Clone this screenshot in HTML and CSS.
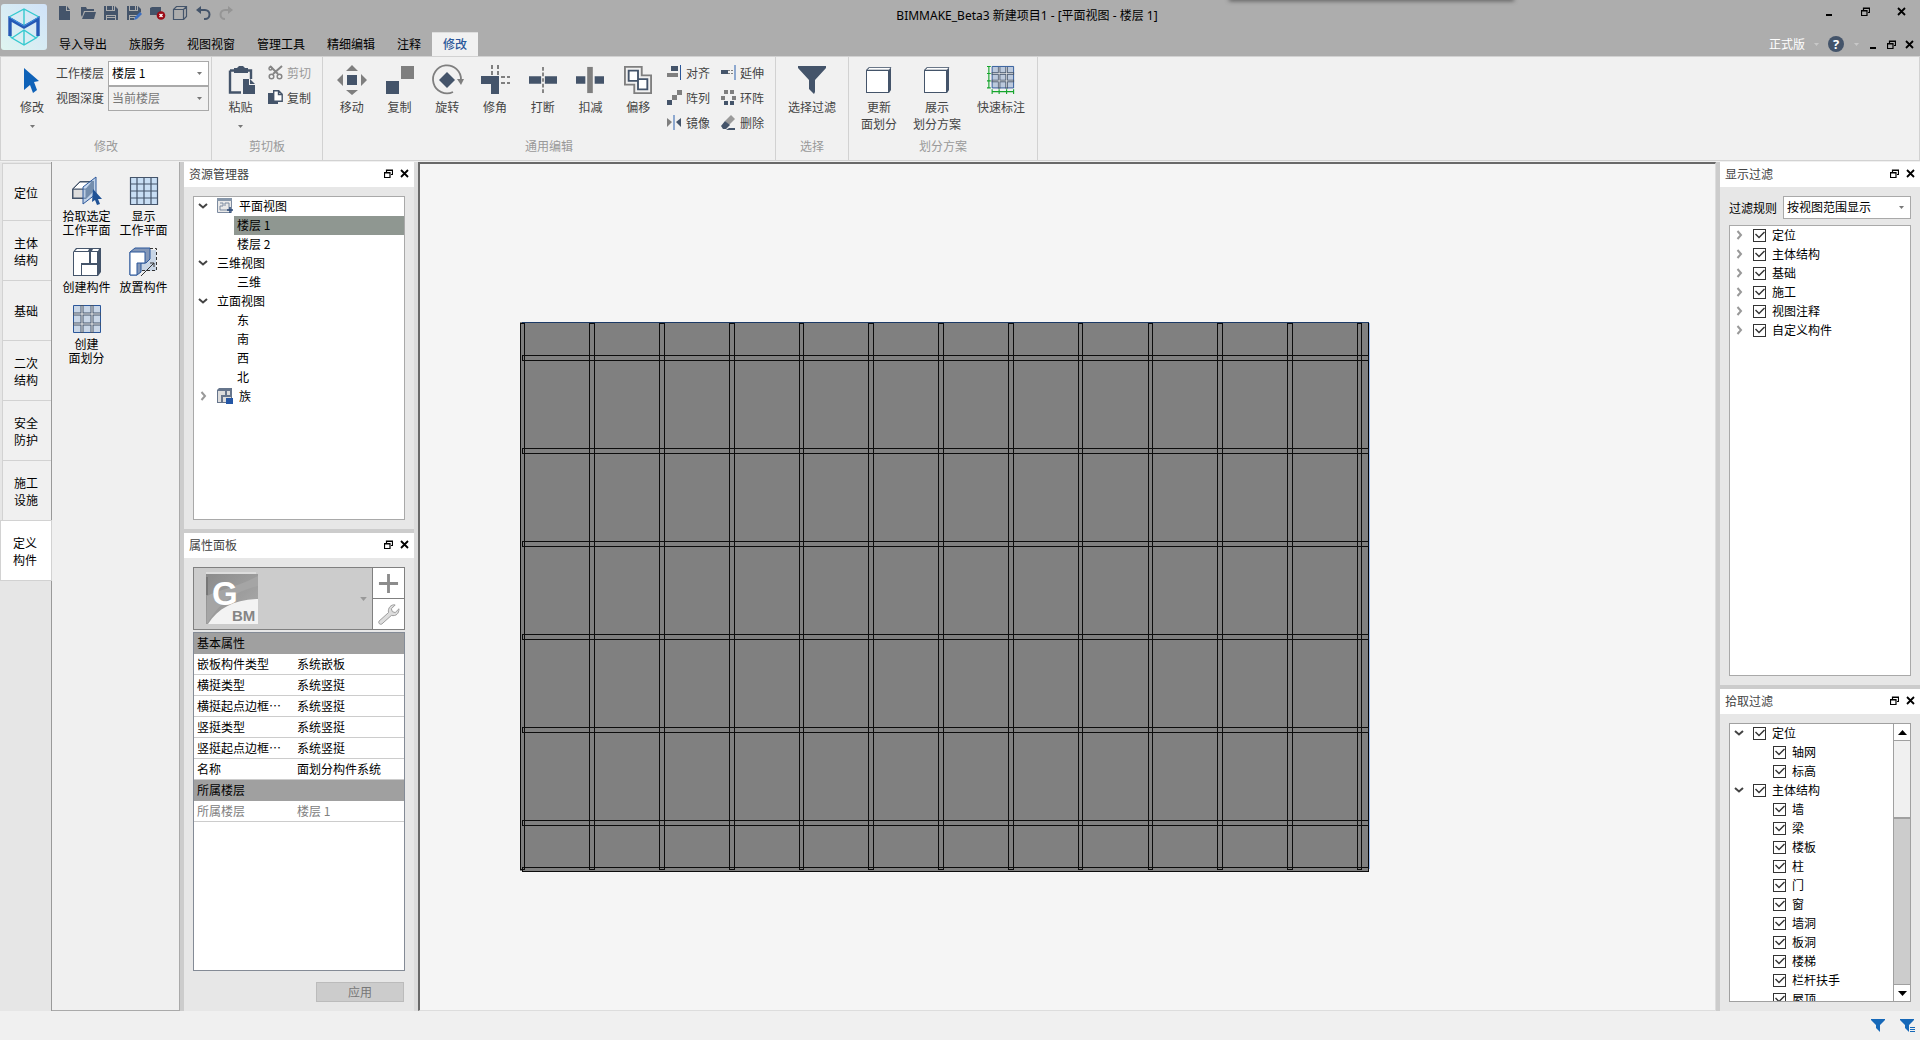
FILE: index.html
```html
<!DOCTYPE html>
<html lang="zh-CN">
<head>
<meta charset="utf-8">
<title>BIMMAKE_Beta3 新建项目1</title>
<link rel="stylesheet" href="styles.css">
</head>
<body>
<svg class="defs" aria-hidden="true">
  <symbol id="restore" viewBox="0 0 9 9"><path d="M2.5 3V1h6v4.500H7M.5 3.500h5.500v5H.5zM.5 4h5.500M2.500 1.500h6" fill="none" stroke="#000" stroke-width="1.200"/></symbol>
  <symbol id="close" viewBox="0 0 9 9"><path d="M1 1l7 7M8 1L1 8" stroke="#000" stroke-width="1.800"/></symbol>
  <symbol id="min" viewBox="0 0 9 9"><path d="M1 7h6v2H1z"/></symbol>
  <symbol id="caret" viewBox="0 0 5 3"><path d="M0 0h5L2.500 3z"/></symbol>
  <symbol id="down" viewBox="0 0 10 10"><path d="M1 3l4 3.500L9 3" fill="none" stroke="#444" stroke-width="2"/></symbol>
  <symbol id="right" viewBox="0 0 10 10"><path d="M3.500 1L7 5 3.500 9" fill="none" stroke="#999" stroke-width="2"/></symbol>
  <symbol id="box3d" viewBox="0 0 28 28"><path d="M1 4l3-3h22v23l-2 3H1z" fill="#44546a"/><path d="M1.500 4.500h22v22h-22z" fill="#fff" stroke="#44546a"/><path d="M2 4l2.500-2.500H26L24 4z" fill="#fff" stroke="#44546a" stroke-width=".6"/></symbol>
  <symbol id="grid9" viewBox="0 0 28 28"><path d="M.5.5h27v27H.5z" fill="#c9d6e6" stroke="#2b579a"/><path d="M9 0v28M19 0v28M0 9h28M0 19h28" stroke="#44546a" stroke-width="3"/><path d="M9 1v26M19 1v26M1 9h26M1 19h26" stroke="#eee"/></symbol>
</svg>
<div class="app">
  <header class="titlebar">
    <svg class="logo" viewBox="0 0 46 46"><defs><linearGradient id="lg" x1="0" y1="1" x2="1" y2="0"><stop offset="0" stop-color="#dff5f0"/><stop offset="1" stop-color="#d0e2f8"/></linearGradient></defs><rect width="46" height="46" rx="3" fill="url(#lg)"/><g fill="none" stroke="#35c9cf" stroke-width="1.400"><path d="M8 13L23 5l15 8M23 5v18M11 34l12-8 12 8-12 7zM23 26v15M8 31l3 3M38 31l-3 3"/></g><path d="M9 32V15l14 8 14-8v17" fill="none" stroke="#2559b5" stroke-width="3.400"/><path d="M8 13l15 9 15-9" fill="none" stroke="#3f92df"/></svg>
    <div class="titlemain">
      <div class="toprow">
        <div class="quick">
          <button aria-label="新建"><svg viewBox="0 0 16 16"><path d="M2 1h7v5h4v9H2zM10 1l3 4h-3z"/></svg></button>
          <button aria-label="打开"><svg viewBox="0 0 16 16"><path d="M1 2h5l1 2h7v2H4L2 12 1 10zM5 7h11l-2 7H2z"/></svg></button>
          <button aria-label="保存"><svg viewBox="0 0 16 16"><path d="M1 1h2v5h9V1l3 3v11h-2v-5H3v5H1zM4 1h5v4H4zM10 1h1v4h-1zM4 11h8v1H4zM4 13h8v2H4z"/></svg></button>
          <button aria-label="另存为"><svg viewBox="0 0 16 16"><path d="M1 1h2v5h9V1l3 3v3l-3 3H3v5H1zM4 1h5v4H4zM10 1h1v4h-1zM4 11h6v1H4zM4 13h4v2H4z"/><path d="M8 15l1-3 5-5 2 2-5 5z" fill="#3d6fc0"/></svg></button>
          <button aria-label="关闭项目"><svg viewBox="0 0 16 16"><path d="M1 3l2-1h9v8H1z"/><circle cx="12" cy="10.500" r="4.300" fill="#9b0b16"/><path d="M10.500 9l3 3M13.500 9l-3 3" stroke="#fff" stroke-width="1.300"/></svg></button>
          <button aria-label="三维视图"><svg viewBox="0 0 16 16"><path d="M1.500 4.500h10v10h-10zM1.500 4.500l3-3h10v10l-3 3M11.500 4.500l3-3" fill="none" stroke="#44546a" stroke-width="1.200"/></svg></button>
          <button aria-label="撤销"><svg viewBox="0 0 16 16"><path d="M1 5l5-4v8z"/><path d="M5 5h5a4.500 4.500 0 010 9H9" fill="none" stroke="#44546a" stroke-width="2"/></svg></button>
          <button aria-label="重做"><svg viewBox="0 0 16 16"><path d="M15 5l-5-4v8z" fill="#959595"/><path d="M11 5H7a4.500 4.500 0 000 9" fill="none" stroke="#959595" stroke-width="2"/></svg></button>
        </div>
        <h1>BIMMAKE_Beta3 新建项目1 - [平面视图 - 楼层 1]</h1>
        <div class="winbtns">
          <button aria-label="最小化"><svg><use href="#min"/></svg></button><button aria-label="还原"><svg><use href="#restore"/></svg></button><button aria-label="关闭"><svg><use href="#close"/></svg></button>
        </div>
      </div>
      <div class="tabrow">
        <nav class="tabs"><button>导入导出</button><button>族服务</button><button>视图视窗</button><button>管理工具</button><button>精细编辑</button><button>注释</button><button class="on">修改</button></nav>
        <div class="tools-right">
          <button class="edition">正式版<svg class="caret"><use href="#caret"/></svg></button>
          <button aria-label="帮助" class="help">?</button>
          <svg class="caret"><use href="#caret"/></svg>
          <div class="docbtns"><button aria-label="最小化文档"><svg><use href="#min"/></svg></button><button aria-label="还原文档"><svg><use href="#restore"/></svg></button><button aria-label="关闭文档"><svg><use href="#close"/></svg></button></div>
        </div>
      </div>
    </div>
    <div class="topshadow"></div>
  </header>

  <section class="ribbon">
    <div class="group g-modify">
      <div class="gbody">
        <button class="big"><svg viewBox="0 0 28 28"><path d="M6 2l15 13-5 1 3 8-4 3-3-8-6 5z" fill="#0f62b8"/></svg>修改<svg class="caret"><use href="#caret"/></svg></button>
        <div class="fields">
          <label for="floor">工作楼层</label><select id="floor"><option>楼层 1</option></select>
          <label for="depth">视图深度</label><select id="depth" class="dim"><option>当前楼层</option></select>
        </div>
      </div>
      <div class="glabel">修改</div>
    </div>
    <div class="group g-clip">
      <div class="gbody">
        <button class="big"><svg viewBox="0 0 28 28"><path d="M3 4.500h21V13M14 26.500H3v-22" fill="none" stroke="#44546a" stroke-width="2.400"/><path d="M7 2h3l2-2h4l2 2h3v5H7zM16 13h6v6h6v9H16zM23 13l5 5h-5z" fill="#44546a"/></svg>粘贴<svg class="caret"><use href="#caret"/></svg></button>
        <div class="smalls">
          <button class="small off"><svg viewBox="0 0 15 15"><path d="M2 1l8 8M14 1L5 9" stroke="#858585" stroke-width="2"/><g fill="none" stroke="#858585" stroke-width="1.500"><circle cx="3.500" cy="11.500" r="2.300"/><circle cx="11.500" cy="11.500" r="2.300"/><circle cx="2.500" cy="3.500" r="1.500"/></g></svg>剪切</button>
          <button class="small"><svg viewBox="0 0 15 15"><path d="M0 3h5v9h5v2H0z" fill="#44546a"/><path d="M5.700.7h5l3.500 3.500v7.100H5.700zM10.500 1v3.500H14" fill="#fff" stroke="#44546a" stroke-width="1.400"/></svg>复制</button>
        </div>
      </div>
      <div class="glabel">剪切板</div>
    </div>
    <div class="group g-edit">
      <div class="gbody">
        <button class="big"><svg viewBox="0 0 28 28"><path d="M9 9h10v10H9z" fill="#44546a"/><path d="M8 5l6-6 6 6zM8 24l6 5 6-5zM5 8v12l-6-6zM23 8v12l6-6z" fill="#7f7f7f"/></svg>移动</button>
        <button class="big"><svg viewBox="0 0 28 28"><path d="M15 0h13v13H15z" fill="#7f7f7f"/><path d="M0 15h13v13H0z" fill="#44546a"/></svg>复制</button>
        <button class="big"><svg viewBox="0 0 28 28"><path d="M14 6l8 8-8 8-8-8z" fill="#44546a"/><path d="M20 26A14 14 0 1128 14" fill="none" stroke="#7f7f7f" stroke-width="1.800"/><path d="M24 13h7l-3 6z" fill="#7f7f7f"/></svg>旋转</button>
        <button class="big"><svg viewBox="0 0 28 28"><path d="M0 10h18v18h-8V18H0z" fill="#44546a"/><path d="M11 9V-1M17 9V-1" stroke="#7f7f7f" stroke-width="2" stroke-dasharray="4 2"/><path d="M20 11h9M20 17h9" stroke="#7f7f7f" stroke-width="2" stroke-dasharray="4 2"/></svg>修角</button>
        <button class="big"><svg viewBox="0 0 30 28"><path d="M0 10h13v8H0zM17 10h13v8H17z" fill="#44546a"/><path d="M15 0v28" stroke="#7f7f7f" stroke-width="2" stroke-dasharray="4 2"/></svg>打断</button>
        <button class="big"><svg viewBox="0 0 30 28"><path d="M0 10h10v8H0zM20 10h10v8H20z" fill="#44546a"/><path d="M12 0h6v28h-6z" fill="#7f7f7f"/></svg>扣减</button>
        <button class="big"><svg viewBox="0 0 30 30"><path d="M1 1h18v9h10v19H11V20H1z" fill="none" stroke="#7f7f7f" stroke-width="2"/><path d="M5 5h10v9h10v11H15v-9H5z" fill="#fff" stroke="#44546a" stroke-width="2"/></svg>偏移</button>
        <div class="smalls">
          <button class="small"><svg viewBox="0 0 15 15"><path d="M4 1h7v5H4z" fill="#44546a"/><path d="M0 8h11v4H0z" fill="#7f7f7f"/><path d="M13.500 0v15" stroke="#2b579a"/></svg>对齐</button>
          <button class="small"><svg viewBox="0 0 15 15"><path d="M0 10h5v5H0z" fill="#44546a"/><path d="M5 5h5v5H5zM10 0h5v5h-5z" fill="#7f7f7f"/></svg>阵列</button>
          <button class="small"><svg viewBox="0 0 15 15"><path d="M0 3l5 4-5 5z" fill="#7f7f7f"/><path d="M14 3L9 7l5 5z" fill="#44546a"/><path d="M7 0v15" stroke="#8ea9d0" stroke-width="2"/></svg>镜像</button>
        </div>
        <div class="smalls">
          <button class="small"><svg viewBox="0 0 15 15"><path d="M0 5h7v4H0z" fill="#44546a"/><path d="M7 5.500h6M7 8.500h6" stroke="#7f7f7f" stroke-dasharray="2 1"/><path d="M14 0v15" stroke="#8ea9d0" stroke-width="2"/></svg>延伸</button>
          <button class="small"><svg viewBox="0 0 15 15"><path d="M3 0h4v4H3zM9 0h4v4H9zM0 6h4v4H0zM11 6h4v4h-4z" fill="#7f7f7f"/><path d="M3 11h4v4H3zM9 11h4v4H9z" fill="#44546a"/></svg>环阵</button>
          <button class="small"><svg viewBox="0 0 15 15"><path d="M10 0l4 4-6 6-4-4z" fill="#9a9a9a"/><path d="M4 6l5 4-4 4H2L0 11zM8 13l6 0v2H5z" fill="#44546a"/></svg>删除</button>
        </div>
      </div>
      <div class="glabel">通用编辑</div>
    </div>
    <div class="group g-select">
      <div class="gbody"><button class="big"><svg viewBox="0 0 28 28"><path d="M0 0h28v2L17 14v12l-1 2-5-5v-9L0 2z" fill="#44546a"/></svg>选择过滤</button></div>
      <div class="glabel">选择</div>
    </div>
    <div class="group g-plan">
      <div class="gbody">
        <button class="big"><svg><use href="#box3d"/></svg>更新<br>面划分</button>
        <button class="big"><svg><use href="#box3d"/></svg>展示<br>划分方案</button>
        <button class="big wide"><svg viewBox="0 0 30 30"><path d="M5.500.5h23v23h-23z" fill="#bcc9dc" stroke="#2b579a"/><path d="M13 1v23M21 1v23M5 8h24M5 16h24" stroke="#44546a" stroke-width="2.600"/><path d="M13 1v22M21 1v22M6 8h22M6 16h22" stroke="#eee" stroke-width=".8"/><path d="M2 0v24M0 .5h4M0 8h4M0 16h4M0 23.500h4M5 27.500h24M5.500 25v5M13 25v5M21 25v5M28.500 25v5" stroke="#15a52c" stroke-width="1.200"/></svg>快速标注</button>
      </div>
      <div class="glabel">划分方案</div>
    </div>
  </section>

  <main class="work">
    <nav class="sidetabs"><button>定位</button><button>主体<br>结构</button><button>基础</button><button>二次<br>结构</button><button>安全<br>防护</button><button>施工<br>设施</button><button class="on">定义<br>构件</button></nav>
    <section class="palette">
      <button><svg viewBox="0 0 30 30"><path d="M0 13l8-8h14v10l-8 8H0z" fill="#44546a"/><path d="M1 13h13v9H1z" fill="#ddd" stroke="#44546a"/><path d="M1 13l7-7h12l-6 7z" fill="#fff" stroke="#44546a"/><path d="M11 28V11L24 1v17z" fill="#9bbbe4" fill-opacity=".55" stroke="#2b579a"/><path d="M21 13l9 10h-4l2 5-3 1-2-5-3 2z" fill="#1f5296"/></svg>拾取选定<br>工作平面</button>
      <button><svg viewBox="0 0 30 30"><path d="M1 1h28v28H1z" fill="#c8def4"/><path d="M1.500 1v28M8 1v28M15 1v28M22 1v28M28.500 1v28M1 1.500h28M1 8h28M1 15h28M1 22h28M1 28.500h28" stroke="#44546a" stroke-width="1.200"/></svg>显示<br>工作平面</button>
      <button><svg viewBox="0 0 30 30"><path d="M1 5l3-4h25v24l-3 4H1z" fill="#44546a"/><path d="M2 5h15v11H9v12H2zM10 18h15v10H10zM19 5h6v11h-6z" fill="#fff"/><path d="M3 4l2-2h12l-1 2zM20 4l1-2h6l-1 2z" fill="#fff"/></svg>创建构件</button>
      <button><svg viewBox="0 0 30 30"><path d="M14 3h13v21H11z" fill="#c9d6e6"/><path d="M1 5l5-4h15v11l-4 4h-5v9l-4 3H1z" fill="#8397b8" stroke="#2b579a"/><path d="M1 5h15v11H8v12H1z" fill="#fff" stroke="#2b579a"/><path d="M21 1.500h6.500v22H12" fill="none" stroke="#333" stroke-dasharray="3 2"/><path d="M12 29l13-13M25 20v-4h-4" fill="none" stroke="#333"/></svg>放置构件</button>
      <button><svg viewBox="-1 -1 30 30"><use href="#grid9" width="28" height="28"/></svg>创建<br>面划分</button>
    </section>
    <div class="gutter"></div>
    <div class="dock dock-left">
      <section class="panel">
        <header><h2>资源管理器</h2><button aria-label="浮动"><svg><use href="#restore"/></svg></button><button aria-label="关闭面板"><svg><use href="#close"/></svg></button></header>
        <div class="pbody">
          <ul class="tree">
            <li><svg class="chev"><use href="#down"/></svg><svg class="ticon" viewBox="0 0 16 16"><path d="M.5.5h14v14H.5z" fill="#e9e9e9" stroke="#7d8ba0"/><path d="M0 0h15v3H0z" fill="#8797aa"/><path d="M3 5h3v3H3v4h9V5H8v3" fill="none" stroke="#7d8ba0"/><path d="M10 12h6M13 9v6" stroke="#2b4a78" stroke-width="1.500"/></svg>平面视图</li>
            <li class="leaf sel">楼层 1</li><li class="leaf">楼层 2</li>
            <li><svg class="chev"><use href="#down"/></svg>三维视图</li><li class="leaf">三维</li>
            <li><svg class="chev"><use href="#down"/></svg>立面视图</li><li class="leaf">东</li><li class="leaf">南</li><li class="leaf">西</li><li class="leaf">北</li>
            <li><svg class="chev"><use href="#right"/></svg><svg class="ticon" viewBox="0 0 16 16"><path d="M0 2l2-2h13v13l-2 2H0z" fill="#66758c"/><path d="M1 3h7v4H4v7H1zM6 9h8v5H6zM10 3h3v4h-3z" fill="#ddd"/><path d="M9 10h7v6H9z" fill="#2456a5"/></svg>族</li>
          </ul>
        </div>
      </section>
      <section class="panel">
        <header><h2>属性面板</h2><button aria-label="浮动"><svg><use href="#restore"/></svg></button><button aria-label="关闭面板"><svg><use href="#close"/></svg></button></header>
        <div class="pbody props">
          <div class="typebox">
            <button class="typepick" aria-label="类型"><svg class="gbm" viewBox="0 0 56 54"><defs><linearGradient id="gg" x1="0" y1="0" x2="1" y2="1"><stop offset="0" stop-color="#8b8b8b"/><stop offset="1" stop-color="#adadad"/></linearGradient></defs><path d="M2 2h52v50H2z" fill="url(#gg)"/><path d="M2 1h50" stroke="#eee"/><path d="M54 4v10C28 20 14 33 3 52V24C14 18 32 16 54 4z" fill="#a5a5a5"/><path d="M4 52C14 36 30 28 54 27v25z" fill="#f3f3f3"/><path d="M3 5v18" stroke="#777" stroke-width="2"/><text x="8" y="33" font-size="33" fill="#fff">G</text><text x="28" y="49" font-size="15" fill="#858585">BM</text></svg><svg class="caret"><use href="#caret"/></svg></button>
            <div class="typebtns"><button aria-label="新增"><svg viewBox="0 0 22 22"><path d="M11 1v20M1 11h20" stroke="#8c8c8c" stroke-width="3"/></svg></button><button aria-label="编辑"><svg viewBox="0 0 22 22"><path d="M1 18L11 9C10 4 14 0 18 1l-4 4 1 3 3 1 4-4c0 5-3 8-8 7L4 21c-2 1-4-1-3-3z" fill="#ddd" stroke="#999"/></svg></button></div>
          </div>
          <div class="proptable">
            <table>
              <colgroup><col class="namecol"><col></colgroup>
              <tr class="sec"><th colspan="2">基本属性</th></tr>
              <tr><td>嵌板构件类型</td><td>系统嵌板</td></tr>
              <tr><td>横挺类型</td><td>系统竖挺</td></tr>
              <tr><td>横挺起点边框…</td><td>系统竖挺</td></tr>
              <tr><td>竖挺类型</td><td>系统竖挺</td></tr>
              <tr><td>竖挺起点边框…</td><td>系统竖挺</td></tr>
              <tr><td>名称</td><td>面划分构件系统</td></tr>
              <tr class="sec"><th colspan="2">所属楼层</th></tr>
              <tr class="ro"><td>所属楼层</td><td>楼层 1</td></tr>
            </table>
          </div>
          <button class="apply">应用</button>
        </div>
      </section>
    </div>
    <div class="gutter pale"></div>
    <section class="canvas">
      <svg class="drawing" aria-label="幕墙网格">
        <rect x="100" y="158" width="849" height="549" fill="#808080"/>
        <path d="M102 158.500H949" stroke="#1c3a66"/><path d="M949.500 159V705" stroke="#9dbdf0"/>
        <g fill="none" stroke="#0c0c0c">
          <path d="M948.500 159V708" stroke="#000"/>
          <rect x="100.500" y="159.500" width="4" height="546"/><rect x="169.500" y="159.500" width="5" height="546"/><rect x="239.500" y="159.500" width="5" height="546"/><rect x="309.500" y="159.500" width="5" height="546"/><rect x="379.500" y="159.500" width="4" height="546"/><rect x="448.500" y="159.500" width="5" height="546"/><rect x="518.500" y="159.500" width="5" height="546"/><rect x="588.500" y="159.500" width="5" height="546"/><rect x="658.500" y="159.500" width="4" height="546"/><rect x="728.500" y="159.500" width="4" height="546"/><rect x="797.500" y="159.500" width="5" height="546"/><rect x="867.500" y="159.500" width="5" height="546"/><rect x="937.500" y="159.500" width="4" height="546"/>
          <rect x="102.500" y="191.500" width="846" height="5"/><rect x="102.500" y="284.500" width="846" height="5"/><rect x="102.500" y="377.500" width="846" height="5"/><rect x="102.500" y="470.500" width="846" height="5"/><rect x="102.500" y="563.500" width="846" height="5"/><rect x="102.500" y="656.500" width="846" height="5"/><rect x="102.500" y="703.500" width="846" height="4"/>
        </g>
      </svg>
    </section>
    <div class="gutter"></div>
    <div class="dock dock-right">
      <section class="panel">
        <header><h2>显示过滤</h2><button aria-label="浮动"><svg><use href="#restore"/></svg></button><button aria-label="关闭面板"><svg><use href="#close"/></svg></button></header>
        <div class="pbody">
          <div class="rule"><label for="rule">过滤规则</label><select id="rule"><option>按视图范围显示</option></select></div>
          <ul class="tree checks">
            <li><svg class="chev"><use href="#right"/></svg><label><input type="checkbox" checked>定位</label></li>
            <li><svg class="chev"><use href="#right"/></svg><label><input type="checkbox" checked>主体结构</label></li>
            <li><svg class="chev"><use href="#right"/></svg><label><input type="checkbox" checked>基础</label></li>
            <li><svg class="chev"><use href="#right"/></svg><label><input type="checkbox" checked>施工</label></li>
            <li><svg class="chev"><use href="#right"/></svg><label><input type="checkbox" checked>视图注释</label></li>
            <li><svg class="chev"><use href="#right"/></svg><label><input type="checkbox" checked>自定义构件</label></li>
          </ul>
        </div>
      </section>
      <section class="panel">
        <header><h2>拾取过滤</h2><button aria-label="浮动"><svg><use href="#restore"/></svg></button><button aria-label="关闭面板"><svg><use href="#close"/></svg></button></header>
        <div class="pbody">
          <div class="scrollbox">
            <ul class="tree checks">
              <li><svg class="chev"><use href="#down"/></svg><label><input type="checkbox" checked>定位</label></li>
              <li class="kid"><label><input type="checkbox" checked>轴网</label></li>
              <li class="kid"><label><input type="checkbox" checked>标高</label></li>
              <li><svg class="chev"><use href="#down"/></svg><label><input type="checkbox" checked>主体结构</label></li>
              <li class="kid"><label><input type="checkbox" checked>墙</label></li>
              <li class="kid"><label><input type="checkbox" checked>梁</label></li>
              <li class="kid"><label><input type="checkbox" checked>楼板</label></li>
              <li class="kid"><label><input type="checkbox" checked>柱</label></li>
              <li class="kid"><label><input type="checkbox" checked>门</label></li>
              <li class="kid"><label><input type="checkbox" checked>窗</label></li>
              <li class="kid"><label><input type="checkbox" checked>墙洞</label></li>
              <li class="kid"><label><input type="checkbox" checked>板洞</label></li>
              <li class="kid"><label><input type="checkbox" checked>楼梯</label></li>
              <li class="kid"><label><input type="checkbox" checked>栏杆扶手</label></li>
              <li class="kid"><label><input type="checkbox" checked>屋顶</label></li>
            </ul>
            <div class="scrollbar"><button aria-label="向上"><svg viewBox="0 0 9 5"><path d="M0 5h9L4.500 0z"/></svg></button><div class="thumb"></div><button class="dn" aria-label="向下"><svg viewBox="0 0 9 5"><path d="M0 0h9L4.500 5z"/></svg></button></div>
          </div>
        </div>
      </section>
    </div>
  </main>
  <footer class="status">
    <button aria-label="过滤"><svg viewBox="0 0 16 13"><path d="M1 0h14v1L10 6v7L6 9V6L1 1z" fill="#1668b8"/></svg></button>
    <button aria-label="过滤列表"><svg viewBox="0 0 16 13"><path d="M1 0h14v1l-5 5v7L6 9V6L1 1z" fill="#1668b8"/><path d="M11 8.500h5M11 10.500h5M11 12.500h5" stroke="#1668b8"/></svg></button>
  </footer>
</div>
</body>
</html>
```

FILE: styles.css
```css
* { box-sizing: border-box; }
body, h1, h2, ul { margin: 0; padding: 0; }
body { font: 12px/18px "Noto Sans CJK SC", sans-serif; color: #000; background: #f0f0f0; }
button, select, input { font: inherit; color: inherit; margin: 0; }
button { border: 0; padding: 0; background: none; }
svg { display: block; flex: none; overflow: visible; }
h1, h2, th { font-size: 12px; font-weight: 400; }
ul { list-style: none; }
.defs { position: absolute; width: 0; height: 0; }
.app { display: flex; flex-direction: column; height: 100vh; overflow: hidden; }
.caret { width: 5px; height: 3px; fill: #777; }

.titlebar { position: relative; display: flex; height: 56px; background: #adadad; }
.logo { width: 46px; height: 46px; margin: 4px 1px 0; }
.titlemain { flex: 1; display: flex; flex-direction: column; justify-content: space-between; }
.toprow { display: grid; grid-template-columns: 1fr auto 1fr; align-items: start; }
.toprow h1 { font-family: "Noto Sans", "Noto Sans CJK SC", sans-serif; padding-top: 7px; margin-left: 86px; }
.quick { display: flex; gap: 7px; padding: 5px 0 0 9px; }
.quick svg { width: 16px; height: 16px; fill: #44546a; }
.winbtns { display: flex; justify-content: flex-end; gap: 27px; padding: 7px 14px 0 0; }
.winbtns svg, .docbtns svg { width: 9px; height: 9px; }
.tabrow { display: flex; justify-content: space-between; align-items: flex-end; }
.tabs { display: flex; }
.tabs button { height: 24px; padding: 0 11px; }
.tabs .on { background: #f1f1f1; color: #2b579a; box-shadow: inset 0 1px #ddd; font-weight: 500; }
.tools-right { display: flex; align-items: center; height: 24px; padding-right: 6px; }
.tools-right .caret { fill: #c8c8c8; }
.edition { display: flex; align-items: center; gap: 9px; color: #fff; }
.help { width: 16px; height: 16px; margin: 0 10px 0 9px; border-radius: 50%; background: #44546a; color: #fff; font: 700 13px/16px "Open Sans", sans-serif; }
.docbtns { display: flex; gap: 9px; margin-left: 10px; }
.topshadow { position: absolute; top: -4px; left: 64%; width: 285px; height: 4px; box-shadow: 0 1px 4px #555; }

.ribbon { display: flex; height: 105px; border: 1px solid #d2d2d2; background: #f1f1f1; color: #444; }
.group { display: flex; flex-direction: column; padding: 2px 0; border-right: 1px solid #d2d2d2; }
.gbody { flex: 1; display: flex; align-items: flex-start; }
.glabel { text-align: center; color: #999; line-height: 18px; padding-bottom: 3px; }
.big { display: flex; flex-direction: column; align-items: center; width: 48px; padding-top: 7px; line-height: 17px; text-align: center; }
.big > svg:first-child { width: 28px; height: 28px; margin-bottom: 4px; }
.big .caret { margin-top: 10px; }
.g-modify { width: 211px; }
.g-modify .big { margin-left: 7px; }
.fields { display: grid; grid-template-columns: 52px 101px; grid-auto-rows: 25px; align-items: center; padding-top: 2px; }
.fields label { padding-bottom: 2px; }
select { appearance: none; width: 100%; height: 25px; padding: 0 3px 2px; border: 1px solid #a9a9a9; border-radius: 0; color: #000; background: url("data:image/svg+xml,%3Csvg xmlns='http://www.w3.org/2000/svg' width='5' height='3'%3E%3Cpath d='M0 0h5L2.5 3z' fill='%23777'/%3E%3C/svg%3E") calc(100% - 6px) 50% no-repeat #fff; }
select.dim { background-color: #f1f1f1; color: #777; }
.g-clip { width: 111px; }
.g-clip .big { margin-left: 5px; }
.smalls { display: flex; flex-direction: column; }
.small { display: flex; align-items: center; gap: 4px; height: 25px; padding-top: 2px; width: 54px; }
.small svg { width: 15px; height: 15px; }
.g-clip .small { margin-left: 4px; }
.off { color: #999; }
.g-edit { width: 453px; }
.g-edit .gbody { padding-left: 5px; }
.g-edit .smalls:nth-last-child(2) { margin-left: 5px; }
.g-select { width: 73px; }
.g-select .big { width: 72px; }
.g-plan { width: 189px; }
.g-plan .gbody { padding-left: 1px; }
.g-plan .big { width: 58px; }
.g-plan .wide { width: 70px; }

.work { flex: 1; min-height: 0; display: grid; grid-template: minmax(0, 1fr) / 52px 128px 4px 230px 4px 1fr 4px 200px; padding-top: 1px; }
.sidetabs { display: flex; flex-direction: column; padding: 1px 0 0 2px; border-right: 1px solid #999; background: #e6e6e6; }
.sidetabs button { height: 60px; line-height: 17px; background: #f0f0f0; border: 1px solid #d2d2d2; border-width: 1px 0 0 1px; padding-right: 2px; }
.sidetabs button:first-child { height: 57px; }
.sidetabs .on { height: 61px; margin: 0 -1px 0 -2px; background: #fff; border-width: 1px; }
.palette { display: grid; grid-template-columns: 57px 57px; align-content: start; padding: 14px 0 0 6px; row-gap: 10px; border-right: 1px solid #aaa; border-bottom: 1px solid #aaa; }
.palette button { display: flex; flex-direction: column; align-items: center; justify-content: flex-start; line-height: 14px; }
.palette svg { width: 30px; height: 30px; margin-bottom: 3px; }
.gutter { background: #ccc; }
.gutter.pale { background: #dcdcdc; }

.dock { display: grid; row-gap: 4px; background: #ccc; }
.dock-left { grid-template-rows: minmax(0, 367fr) minmax(0, 478fr); }
.dock-right { grid-template-rows: minmax(0, 523fr) minmax(0, 322fr); }
.panel { display: flex; flex-direction: column; background: #e7e7e7; }
.panel header { display: flex; align-items: center; gap: 7px; height: 25px; padding: 0 5px 2px; background: #fff; color: #444; }
.panel h2 { flex: 1; }
.panel header svg { width: 9px; height: 9px; }
.pbody { flex: 1; min-height: 0; display: flex; flex-direction: column; padding: 9px; }
.tree { flex: 1; min-height: 0; overflow: hidden; border: 1px solid #a9a9a9; background: #fff; }
.tree li { display: flex; align-items: center; height: 19px; padding: 0 0 1px 4px; }
.chev { width: 10px; height: 10px; margin-right: 9px; }
.ticon { width: 16px; height: 16px; margin-right: 6px; }
.tree .leaf { margin-left: 40px; padding-left: 3px; }
.tree .sel { background: #8f9791; }
.dock-right .tree li { padding-left: 4px; }
.dock-right .tree .kid { padding-left: 43px; }
.checks label { display: flex; align-items: center; gap: 6px; }
.checks input { appearance: none; width: 13px; height: 13px; border: 1px solid #333; background: #fff; }
.checks input:checked::before { content: ""; display: block; width: 11px; height: 11px; background: #333; clip-path: polygon(1px 5px, 2px 4px, 5px 7px, 10px 2px, 11px 3px, 5px 9px); }
.rule { display: grid; grid-template-columns: 54px 1fr; align-items: center; margin-bottom: 6px; }
.rule select { height: 23px; }
.scrollbox { flex: 1; min-height: 0; display: flex; border: 1px solid #a0a0a0; background: #fff; }
.scrollbox .tree { border: 0; }
.scrollbar { display: flex; flex-direction: column; width: 17px; background: #ccc; border-left: 1px solid #a0a0a0; }
.scrollbar button { display: grid; place-items: center; height: 17px; background: #fff; border-bottom: 1px solid #a0a0a0; }
.scrollbar svg { width: 9px; height: 5px; }
.scrollbar .dn { margin-top: auto; border-top: 1px solid #a0a0a0; border-bottom: 0; }
.thumb { height: 28%; background: #f0f0f0; border-bottom: 2px solid #a0a0a0; }

.typebox { display: flex; height: 63px; border: 1px solid #808080; background: #ccc; }
.typepick { flex: 1; display: flex; align-items: center; justify-content: space-between; padding: 0 5px 0 10px; border-right: 1px solid #808080; }
.typepick .caret { width: 7px; height: 4px; fill: #999; }
.gbm { width: 56px; height: 54px; font-family: "Liberation Sans", sans-serif; font-weight: 700; }
.typebtns { display: grid; grid-template-rows: 1fr 1fr; gap: 1px; width: 31px; background: #808080; }
.typebtns button { display: grid; place-items: center; background: #fff; }
.typebtns svg { width: 21px; height: 21px; }
.proptable { flex: 1; min-height: 0; margin: 2px 0 11px; border: 1px solid #848b96; background: #fff; overflow: hidden; }
table { width: 100%; border-spacing: 0; table-layout: fixed; }
td, th { height: 21px; padding: 0 3px; line-height: 18px; text-align: left; border-bottom: 1px solid #ccc; white-space: nowrap; }
.namecol { width: 100px; }
.sec th { background: #a0a0a0; border-color: #a0a0a0; }
.ro { color: #808080; }
.apply { align-self: flex-end; width: 88px; height: 20px; margin-right: 1px; border: 1px solid #bbb; background: #ccc; color: #777; }

.canvas { min-width: 0; overflow: hidden; background: #f5f5f5; border: 2px solid #696969; border-right: 1px solid #ddd; border-bottom: 1px solid #ddd; }
.drawing { width: 100%; height: 100%; }

.status { display: flex; align-items: center; justify-content: flex-end; gap: 13px; height: 29px; padding-right: 5px; }
.status svg { width: 16px; height: 13px; }
```
